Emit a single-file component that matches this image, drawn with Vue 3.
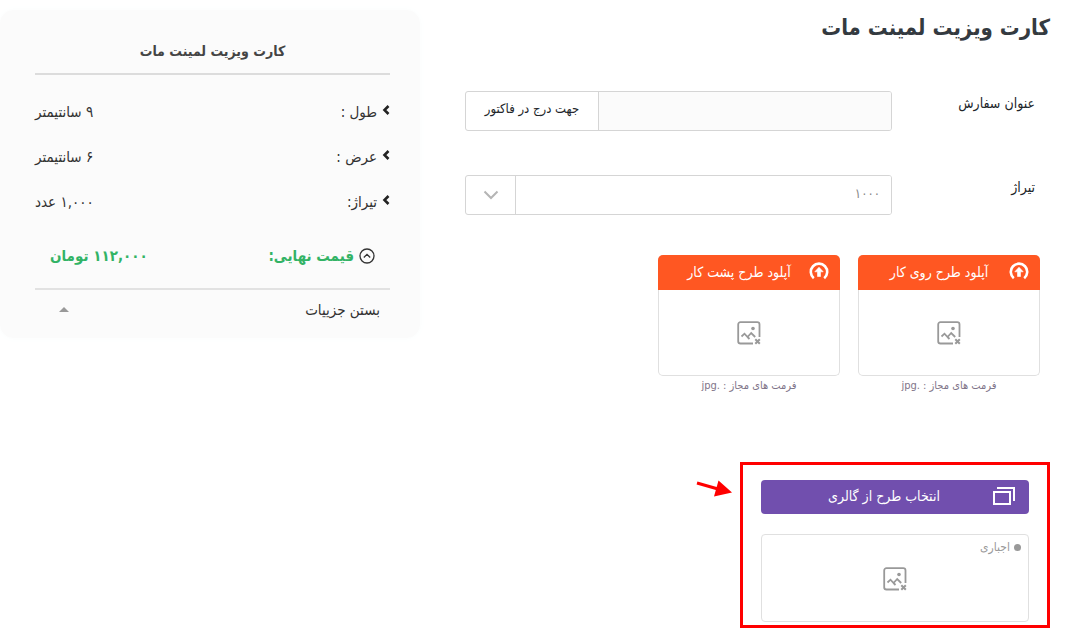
<script setup>
import { ref } from 'vue'

const orderTitle = ref('')
const quantity = ref('1000')
const open = ref(true)

const specs = [
  { label: 'طول :', value: '۹ سانتیمتر' },
  { label: 'عرض :', value: '۶ سانتیمتر' },
  { label: 'تیراژ:', value: '۱,۰۰۰ عدد' },
]
const uploads = ['آپلود طرح روی کار', 'آپلود طرح پشت کار']
</script>

<template>
  <div class="page" dir="rtl" lang="fa">
    <main class="order">
      <h1 class="title">کارت ویزیت لمینت مات</h1>

      <form class="fields" @submit.prevent>
        <div class="field">
          <label for="order-title">عنوان سفارش</label>
          <div class="control">
            <input id="order-title" v-model="orderTitle" type="text" />
            <span class="hint">جهت درج در فاکتور</span>
          </div>
        </div>
        <div class="field">
          <label for="quantity">تیراژ</label>
          <div class="control">
            <select id="quantity" v-model="quantity">
              <option value="1000">۱۰۰۰</option>
            </select>
            <span class="caret">
              <svg width="16" height="10" viewBox="0 0 16 10"><path d="M1.500 1.500 8 8l6.500-6.500" fill="none" stroke="#b5b5b5" stroke-width="2" /></svg>
            </span>
          </div>
        </div>
      </form>

      <div class="uploads">
        <section v-for="name in uploads" :key="name" class="upload">
          <div class="card">
            <button type="button" class="upload-button">
              <svg width="20" height="20" viewBox="0 0 20 20">
                <path d="M4.800 16.200A8.200 8.200 0 1 1 15.200 16.200" fill="none" stroke="#fff" stroke-width="2.600" />
                <path d="M10 5.200 14.200 9.800H11.500V14.500H8.500V9.800H5.800Z" fill="#fff" stroke="#fff" stroke-width=".6" stroke-linejoin="round" />
              </svg>
              <span>{{ name }}</span>
            </button>
            <div class="preview">
              <svg width="24" height="24" viewBox="0 0 24 24" fill="none" stroke="#999" stroke-width="1.800">
                <path d="M16 22.500H3.500a2.300 2.300 0 0 1-2.300-2.300V3.500a2.300 2.300 0 0 1 2.300-2.300h16.700a2.300 2.300 0 0 1 2.300 2.300V16" />
                <path d="m4.500 15.500 3-2.800 3 3.300 3.700-4 4 4M10.500 16l2 2" />
                <path d="m18.300 18.300 4.500 4.500m0-4.500-4.500 4.500" stroke-width="2" />
                <circle cx="16" cy="7.500" r="1.800" fill="#999" stroke="none" />
              </svg>
            </div>
          </div>
          <p class="formats">فرمت های مجاز : .jpg</p>
        </section>
      </div>

      <section class="gallery">
        <svg class="pointer" width="38" height="20" viewBox="0 0 38 20">
          <path d="M1 3 22 9" stroke="#f00" stroke-width="3" />
          <path d="M22.500 .5 36 12.500 18 16.500Z" fill="#f00" />
        </svg>
        <button type="button" class="gallery-button">
          <svg width="22" height="18" viewBox="0 0 22 18" fill="none" stroke="#fff" stroke-width="2">
            <path d="M1 5h16v12H1Z" />
            <path d="M4 1h17v13" />
          </svg>
          <span>انتخاب طرح از گالری</span>
        </button>
        <div class="gallery-preview">
          <span class="required"><i class="dot"></i>اجباری</span>
          <svg width="24" height="24" viewBox="0 0 24 24" fill="none" stroke="#999" stroke-width="1.800">
            <path d="M16 22.500H3.500a2.300 2.300 0 0 1-2.300-2.300V3.500a2.300 2.300 0 0 1 2.300-2.300h16.700a2.300 2.300 0 0 1 2.300 2.300V16" />
            <path d="m4.500 15.500 3-2.800 3 3.300 3.700-4 4 4M10.500 16l2 2" />
            <path d="m18.300 18.300 4.500 4.500m0-4.500-4.500 4.500" stroke-width="2" />
            <circle cx="16" cy="7.500" r="1.800" fill="#999" stroke="none" />
          </svg>
        </div>
      </section>
    </main>

    <aside class="summary">
      <h2 class="summary-title">کارت ویزیت لمینت مات</h2>
      <dl v-show="open" class="specs">
        <div v-for="spec in specs" :key="spec.label" class="spec">
          <dt>
            <svg width="8" height="16" viewBox="0 0 8 16"><path d="M6.500 2 2.500 6l4 4" fill="none" stroke="#222" stroke-width="2.600" /></svg>
            {{ spec.label }}
          </dt>
          <dd>{{ spec.value }}</dd>
        </div>
      </dl>
      <div class="total">
        <span class="total-label">
          <svg width="16" height="16" viewBox="0 0 16 16" fill="none" stroke="#333" stroke-width="1.300">
            <circle cx="8" cy="8" r="7" />
            <path d="M4.800 9.500 8 6.300l3.200 3.200" />
          </svg>
          قیمت نهایی:
        </span>
        <span>۱۱۲,۰۰۰ تومان</span>
      </div>
      <button type="button" class="toggle" @click="open = !open">
        <span>بستن جزییات</span>
        <svg width="10" height="5" viewBox="0 0 10 5"><path d="M0 5 5 0l5 5Z" fill="#999" /></svg>
      </button>
    </aside>
  </div>
</template>

<style>
body {
  margin: 0;
  background: #fff;
}
</style>

<style scoped>
.page {
  display: grid;
  grid-template-columns: minmax(0, 1fr) 420px;
  align-items: start;
  gap: 45px;
  padding: 10px 42px 13px 0;
  font-family: "DejaVu Sans Condensed", "DejaVu Sans", sans-serif;
  font-size: 14px;
  color: #212529;
}
.page * {
  box-sizing: border-box;
}
svg {
  display: block;
  flex: none;
}
button,
input,
select {
  font: inherit;
}
button {
  border: 0;
  cursor: pointer;
}
.title {
  margin: 0;
  font-size: 22px;
  line-height: 36px;
  color: #343a40;
}
.fields {
  display: grid;
  gap: 44px;
  margin-top: 45px;
}
.field {
  display: flex;
}
.field label {
  flex: 0 0 158px;
  padding-right: 15px;
  line-height: 24px;
}
.control {
  display: flex;
  flex: 1;
  min-width: 0;
  height: 40px;
  border: 1px solid #d5d5d5;
  border-radius: 3px;
  overflow: hidden;
}
.control input,
.control select {
  flex: 1;
  min-width: 0;
  margin: 0;
  padding: 0 11px 4px;
  border: 0;
  border-radius: 0;
  outline: 0;
  background: #fff;
  color: #888;
  font-size: 13px;
  appearance: none;
}
.control input {
  background: #fbfbfb;
}
.hint,
.caret {
  flex: none;
  display: flex;
  align-items: center;
  justify-content: center;
  border-right: 1px solid #d5d5d5;
}
.hint {
  width: 133px;
  padding-bottom: 6px;
  font-size: 13px;
}
.caret {
  width: 50px;
}
.uploads {
  display: flex;
  gap: 18px;
  margin: 40px 10px 0 0;
}
.upload {
  width: 182px;
}
.card {
  border: 1px solid #e0e0e0;
  border-top: 0;
  border-radius: 5px;
}
.upload-button {
  display: flex;
  align-items: center;
  width: calc(100% + 2px);
  height: 35px;
  margin: 0 -1px;
  padding: 0 11px 2px;
  border-radius: 5px 5px 0 0;
  background: #ff5722;
  color: #fff;
}
.upload-button span,
.gallery-button span {
  flex: 1;
  text-align: center;
}
.preview {
  display: flex;
  align-items: center;
  justify-content: center;
  height: 85px;
}
.formats {
  margin: 0;
  font-size: 11px;
  line-height: 20px;
  text-align: center;
  color: #7f7589;
}
.gallery {
  position: relative;
  width: 310px;
  margin-top: 66px;
  padding: 15px 18px 3px;
  border: 3px solid #f00;
}
.pointer {
  position: absolute;
  top: 15px;
  left: -47px;
}
.gallery-button {
  display: flex;
  align-items: center;
  width: 100%;
  height: 34px;
  padding: 0 14px 2px;
  border-radius: 4px;
  background: #714fae;
  color: #fff;
}
.gallery-preview {
  display: grid;
  grid-template-rows: 24px 1fr;
  justify-items: center;
  height: 88px;
  margin-top: 20px;
  border: 1px solid #e0e0e0;
  border-radius: 4px;
}
.gallery-preview svg {
  margin-top: 8px;
}
.required {
  display: flex;
  align-items: center;
  justify-self: start;
  gap: 4px;
  padding-right: 7px;
  font-size: 12px;
  color: #999;
}
.dot {
  width: 7px;
  height: 7px;
  border-radius: 50%;
  background: #999;
}
.summary {
  min-height: 328px;
  padding: 25px 30px 9px 35px;
  border-radius: 14px;
  background: #fbfbfb;
  box-shadow: 0 0 8px #fafdfd;
}
.summary-title {
  margin: 0;
  padding-bottom: 6px;
  border-bottom: 2px solid #dcdcdc;
  font-size: 14px;
  line-height: 32px;
  text-align: center;
  color: #444;
}
.specs {
  margin: 14px 0 0;
}
.spec,
.total,
.toggle {
  display: flex;
  align-items: center;
  justify-content: space-between;
}
.spec {
  height: 45px;
  font-size: 15px;
  color: #333;
}
.spec dt,
.total-label {
  display: flex;
  align-items: center;
  gap: 5px;
}
.spec dd {
  margin: 0;
}
.total {
  height: 66px;
  padding: 0 15px;
  border-bottom: 2px solid #e2e2e2;
  font-size: 15px;
  font-weight: bold;
  color: #32b365;
}
.toggle {
  width: 100%;
  height: 39px;
  padding: 0 10px 0 24px;
  background: transparent;
  color: #333;
  font-size: 15px;
}
</style>
